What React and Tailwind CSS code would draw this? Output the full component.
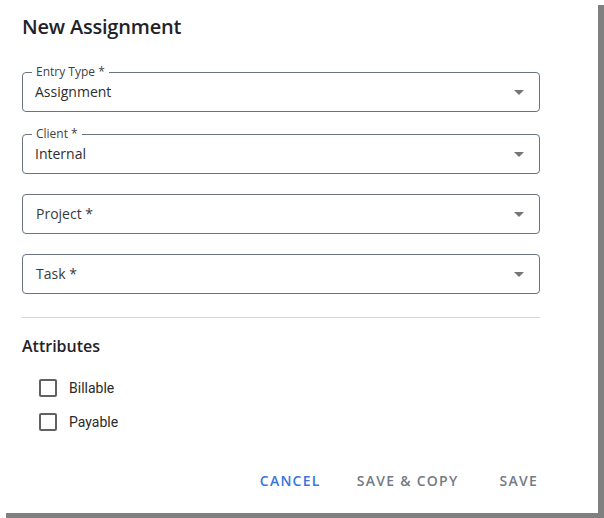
import React from "react";

const fonts = { fontFamily: '"Open Sans", "Liberation Sans", sans-serif' };

function Caret() {
  return (
    <svg width="10" height="5" viewBox="0 0 10 5" className="shrink-0">
      <path d="M0 0 L10 0 L5 5 Z" fill="#757575" />
    </svg>
  );
}

function SelectField({ label, value, className }) {
  return (
    <div
      className={`relative flex h-[40px] w-[518px] items-center rounded-[4px] border border-[#6b7280] pr-[15px] ${className}`}
    >
      {value && (
        <span className="absolute -top-[9px] left-[9px] bg-white px-[4px] text-[12px] leading-[16px] text-[#3f3f46]">
          {label}
        </span>
      )}
      <span
        className={`flex-1 text-[14px] leading-[20px] ${
          value ? "pl-[12px] text-[#2d2d2d]" : "pl-[13px] text-[#3a3a3a]"
        }`}
      >
        {value || label}
      </span>
      <Caret />
    </div>
  );
}

function Check({ label, className }) {
  return (
    <label className={`flex items-center ${className}`}>
      <span className="ml-[17px] h-[18px] w-[18px] rounded-[2px] border-2 border-[#616161] bg-white" />
      <span
        className="ml-[12px] text-[14px] leading-[20px] text-[#2a2a2a]"
        style={{ fontFamily: 'Roboto, "Liberation Sans", sans-serif' }}
      >
        {label}
      </span>
    </label>
  );
}

export default function App() {
  return (
    <div className="h-[518px] w-[604px] bg-white" style={fonts}>
      <div className="flex h-[513px] w-[598px] flex-col bg-white pl-[22px] shadow-[6px_5px_0_#808080]">
        <h1 className="pt-[13px] text-[20px] font-semibold leading-[28px] tracking-[-0.2px] text-[#1f2329]">
          New Assignment
        </h1>

        <SelectField label="Entry Type *" value="Assignment" className="mt-[31px]" />
        <SelectField label="Client *" value="Internal" className="mt-[22px]" />
        <SelectField label="Project *" className="mt-[20px]" />
        <SelectField label="Task *" className="mt-[20px]" />

        <div className="mt-[23px] h-px w-[518px] bg-[#d4d6db]" />

        <h2 className="mt-[17px] text-[16px] font-semibold leading-[22px] text-[#1f2329]">
          Attributes
        </h2>

        <Check label="Billable" className="mt-[21px]" />
        <Check label="Payable" className="mt-[14px]" />

        <div className="mt-[39px] flex w-[518px] items-center justify-end text-[14px] font-semibold leading-[20px] tracking-[0.09em]">
          <button className="text-[#3a74dc]">CANCEL</button>
          <button className="ml-[36px] text-[#747a84]">SAVE &amp; COPY</button>
          <button className="ml-[41px] mr-[2px] text-[#747a84]">SAVE</button>
        </div>
      </div>
    </div>
  );
}
